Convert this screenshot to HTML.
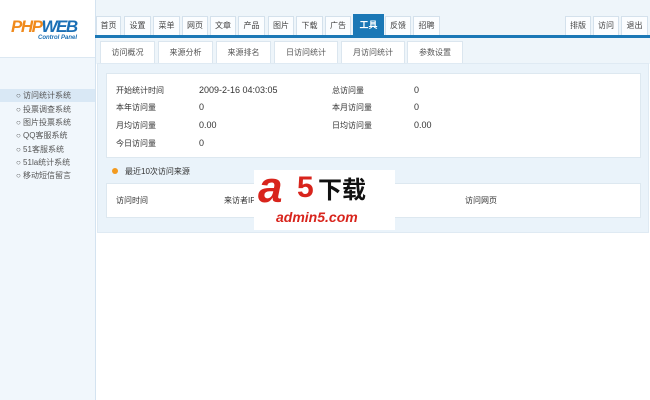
<html><head><style>
body{margin:0;width:650px;height:400px;background:#fff;font-family:"Liberation Sans","Noto Sans CJK SC",sans-serif;font-size:8px;color:#333;position:relative;overflow:hidden}
div,span{position:absolute;box-sizing:border-box}
.side{left:0;top:0;width:96px;height:400px;background:#f1f7fc;border-right:1px solid #d4e3f0}
.top{left:96px;top:0;width:554px;height:37px;background:#eef5fa}
.t{top:16px;height:19px;background:#fbfdff;border:1px solid #d4e1ec;border-bottom:none;text-align:center;line-height:18px;color:#444}
.t.a{background:#1b78b6;color:#fff;font-weight:bold;border-color:#1b78b6;top:14px;height:21px;line-height:21px;font-size:9px}
.bar{left:95px;top:35px;width:555px;height:3px;background:#1b78b6}
.st{top:41px;height:23px;background:#fff;border:1px solid #dbe6ef;border-bottom:none;text-align:center;line-height:22px;color:#555}
.panel{left:97px;top:63px;width:552px;height:170px;background:#eaf3fa;border:1px solid #dfeaf3}
.box{background:#fff;border:1px solid #dde8f0}
.m{left:16px;color:#555;font-size:8px;width:80px}
</style></head><body>
<div class="side"></div>
<div style="left:0;top:0;width:95px;height:58px;background:#fff;border-bottom:1px solid #dce8f2"></div>
<div style="left:11px;top:17px;font:italic bold 17px 'Liberation Sans',sans-serif;color:#f08a1c;letter-spacing:-1.5px">PHP<span style="position:static;color:#1a6fb5">WEB</span></div>
<div style="left:38px;top:35px;font:italic bold 6px 'Liberation Sans',sans-serif;color:#1a6fb5">Control Panel</div>
<div style="left:0;top:89px;width:95px;height:13px;background:#d9e8f5"></div>
<div class="m" style="top:90px">○ 访问统计系统</div>
<div class="m" style="top:104px">○ 投票调查系统</div>
<div class="m" style="top:117px">○ 图片投票系统</div>
<div class="m" style="top:130px">○ QQ客服系统</div>
<div class="m" style="top:144px">○ 51客服系统</div>
<div class="m" style="top:157px">○ 51la统计系统</div>
<div class="m" style="top:170px">○ 移动短信留言</div>
<div class="top"></div>
<div class="t" style="left:96px;width:25px">首页</div>
<div class="t" style="left:124px;width:27px">设置</div>
<div class="t" style="left:153px;width:27px">菜单</div>
<div class="t" style="left:182px;width:26px">网页</div>
<div class="t" style="left:210px;width:26px">文章</div>
<div class="t" style="left:238px;width:27px">产品</div>
<div class="t" style="left:268px;width:26px">图片</div>
<div class="t" style="left:296px;width:27px">下载</div>
<div class="t" style="left:325px;width:26px">广告</div>
<div class="t a" style="left:353px;width:31px">工具</div>
<div class="t" style="left:385px;width:26px">反馈</div>
<div class="t" style="left:413px;width:27px">招聘</div>
<div class="t" style="left:565px;width:26px">排版</div>
<div class="t" style="left:593px;width:26px">访问</div>
<div class="t" style="left:621px;width:27px">退出</div>
<div class="bar"></div>
<div style="left:96px;top:38px;width:554px;height:26px;background:#eef5fa"></div>
<div class="st" style="left:100px;width:55px">访问概况</div>
<div class="st" style="left:158px;width:55px">来源分析</div>
<div class="st" style="left:216px;width:55px">来源排名</div>
<div class="st" style="left:274px;width:64px">日访问统计</div>
<div class="st" style="left:341px;width:64px">月访问统计</div>
<div class="st" style="left:407px;width:56px">参数设置</div>
<div class="panel"></div>
<div class="box" style="left:106px;top:73px;width:535px;height:85px"></div>
<div style="left:116px;top:85px">开始统计时间</div><div style="left:199px;top:85px;font-size:9px">2009-2-16 04:03:05</div>
<div style="left:332px;top:85px">总访问量</div><div style="left:414px;top:85px;font-size:9px">0</div>
<div style="left:116px;top:102px">本年访问量</div><div style="left:199px;top:102px;font-size:9px">0</div>
<div style="left:332px;top:102px">本月访问量</div><div style="left:414px;top:102px;font-size:9px">0</div>
<div style="left:116px;top:120px">月均访问量</div><div style="left:199px;top:120px;font-size:9px">0.00</div>
<div style="left:332px;top:120px">日均访问量</div><div style="left:414px;top:120px;font-size:9px">0.00</div>
<div style="left:116px;top:138px">今日访问量</div><div style="left:199px;top:138px;font-size:9px">0</div>
<div style="left:112px;top:168px;width:6px;height:6px;border-radius:50%;background:#f39a1e"></div>
<div style="left:125px;top:166px">最近10次访问来源</div>
<div class="box" style="left:106px;top:183px;width:535px;height:35px"></div>
<div style="left:116px;top:195px">访问时间</div>
<div style="left:224px;top:195px">来访者IP</div>
<div style="left:465px;top:195px">访问网页</div>
<div style="left:254px;top:170px;width:141px;height:60px;background:#fff"></div>
<div style="left:258px;top:166px;font:italic bold 44px 'Liberation Sans',sans-serif;color:#d8241c;line-height:44px">a</div>
<div style="left:297px;top:172px;font:bold 30px 'Liberation Sans',sans-serif;color:#d8241c;line-height:32px">5</div>
<div style="left:318px;top:174px;font:bold 24px 'Noto Sans CJK SC',sans-serif;color:#111;line-height:28px">下载</div>
<div style="left:276px;top:209px;font:italic bold 14px 'Liberation Sans',sans-serif;color:#d8241c;line-height:16px">admin5.com</div>
</body></html>
